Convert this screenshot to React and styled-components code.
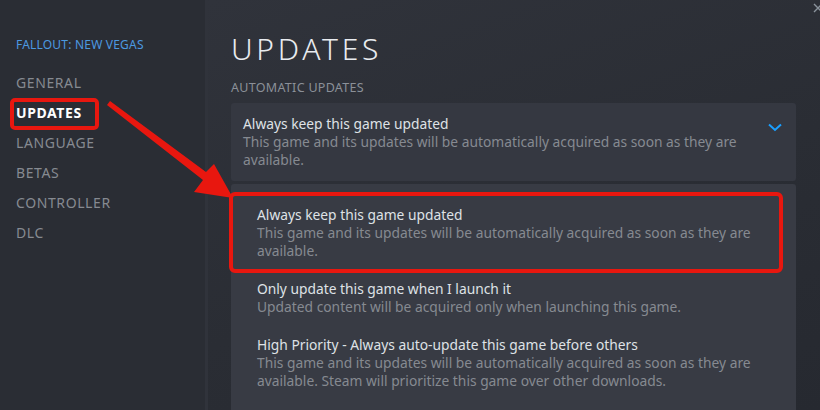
import React from "react";
import styled, { createGlobalStyle } from "styled-components";

const GlobalStyle = createGlobalStyle`
  html, body {
    margin: 0;
    padding: 0;
    background: #24272e;
  }
  body {
    font-family: "Noto Sans", "Open Sans", Arial, sans-serif;
    overflow: hidden;
  }
`;

const navItems = ["GENERAL", "UPDATES", "LANGUAGE", "BETAS", "CONTROLLER", "DLC"];

const options = [
  {
    title: "Always keep this game updated",
    desc: "This game and its updates will be automatically acquired as soon as they are available.",
    marked: true,
  },
  {
    title: "Only update this game when I launch it",
    desc: "Updated content will be acquired only when launching this game.",
  },
  {
    title: "High Priority - Always auto-update this game before others",
    desc: "This game and its updates will be automatically acquired as soon as they are available. Steam will prioritize this game over other downloads.",
  },
];

export default function App() {
  return (
    <>
      <GlobalStyle />
      <Window>
        <Sidebar>
          <GameTitle>FALLOUT: NEW VEGAS</GameTitle>
          <NavList>
            {navItems.map((item) => (
              <NavItem key={item} $active={item === "UPDATES"}>
                {item}
              </NavItem>
            ))}
          </NavList>
        </Sidebar>
        <Main>
          <Heading>UPDATES</Heading>
          <SectionLabel>AUTOMATIC UPDATES</SectionLabel>
          <DropdownHeader>
            <OptionText>
              <OptionTitle>Always keep this game updated</OptionTitle>
              <OptionDesc>
                This game and its updates will be automatically acquired as soon as they are available.
              </OptionDesc>
            </OptionText>
            <Chevron viewBox="0 0 14 9">
              <path d="M1 1.5 L7 7 L13 1.5" fill="none" stroke="#1a9fff" strokeWidth="2" />
            </Chevron>
          </DropdownHeader>
          <DropdownList>
            {options.map((o) => (
              <Option key={o.title} $marked={o.marked}>
                <OptionTitle>{o.title}</OptionTitle>
                <OptionDesc>{o.desc}</OptionDesc>
              </Option>
            ))}
          </DropdownList>
        </Main>
        <CloseIcon viewBox="0 0 10 10">
          <path d="M1 1 L9 9 M9 1 L1 9" stroke="#8a939c" strokeWidth="1.4" fill="none" />
        </CloseIcon>
        <Arrow viewBox="0 0 820 410">
          <polygon
            points="107,105 110,101 206,172 214,164 233,198 194,192 203,180"
            fill="#e8170f"
          />
        </Arrow>
      </Window>
    </>
  );
}

const Window = styled.div`
  position: relative;
  width: 820px;
  height: 410px;
  display: grid;
  grid-template-columns: 205px 1fr;
  overflow: hidden;
`;

const Sidebar = styled.div`
  background: #2a2d34;
  padding: 36px 0 0 16px;
`;

const GameTitle = styled.div`
  color: #4c99e0;
  font-size: 12px;
  letter-spacing: 0.2px;
  line-height: 18px;
  margin-bottom: 14px;
`;

const NavList = styled.div`
  display: flex;
  flex-direction: column;
`;

const NavItem = styled.div`
  position: relative;
  height: 30px;
  line-height: 30px;
  font-size: 14px;
  letter-spacing: 0.6px;
  color: ${(p) => (p.$active ? "#ffffff" : "#868a91")};
  font-weight: ${(p) => (p.$active ? 700 : 400)};

  ${(p) =>
    p.$active &&
    `
    &::after {
      content: "";
      position: absolute;
      left: -6px;
      top: 0;
      width: 81px;
      height: 24px;
      border: 4px solid #e8170f;
      border-radius: 5px;
    }
  `}
`;

const Main = styled.div`
  background: linear-gradient(160deg, #30333b 0%, #2a2d34 55%, #262930 100%);
  border-left: 3px solid #30333b;
  padding: 30px 24px 0 23px;
  display: flex;
  flex-direction: column;
`;

const Heading = styled.h1`
  margin: 0;
  font-size: 30px;
  font-weight: 300;
  letter-spacing: 3.7px;
  color: #e8ebef;
  line-height: 38px;
`;

const SectionLabel = styled.div`
  margin-top: 12px;
  font-size: 12.5px;
  letter-spacing: 0.3px;
  color: #8b9098;
  line-height: 16px;
`;

const DropdownHeader = styled.div`
  margin-top: 7px;
  background: #353841;
  border-radius: 3px;
  padding: 12px 14px 12px 12px;
  display: flex;
  align-items: flex-start;
  justify-content: space-between;
`;

const OptionText = styled.div`
  flex: 1;
`;

const OptionTitle = styled.div`
  font-size: 13.8px;
  color: #dfe2e6;
  line-height: 18px;
`;

const OptionDesc = styled.div`
  font-size: 13.8px;
  color: #868a91;
  line-height: 18px;
  max-width: 530px;
`;

const Chevron = styled.svg`
  width: 14px;
  height: 9px;
  margin-top: 8px;
`;

const DropdownList = styled.div`
  margin-top: 3px;
  background: #383b44;
  border-radius: 3px 3px 0 0;
  flex: 1;
  padding: 12px 0 0 0;
  display: flex;
  flex-direction: column;
`;

const Option = styled.div`
  position: relative;
  padding: 10px 20px 10px 26px;

  ${(p) =>
    p.$marked &&
    `
    &::after {
      content: "";
      position: absolute;
      top: -4px;
      bottom: -3px;
      left: -2px;
      right: 13px;
      border: 4px solid #e8170f;
      border-radius: 6px;
    }
  `}
`;

const CloseIcon = styled.svg`
  position: absolute;
  top: 3px;
  right: -3px;
  width: 10px;
  height: 10px;
`;

const Arrow = styled.svg`
  position: absolute;
  left: 0;
  top: 0;
  width: 820px;
  height: 410px;
  pointer-events: none;
`;
